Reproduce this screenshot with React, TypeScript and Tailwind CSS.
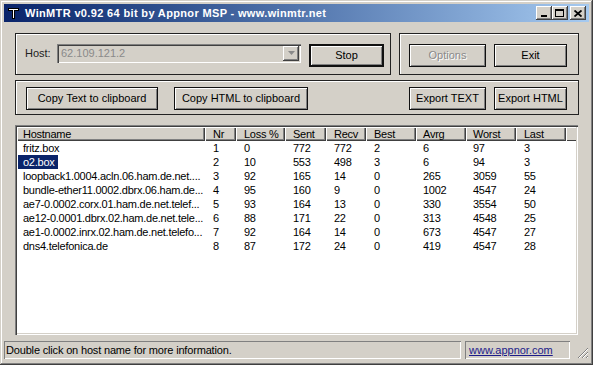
import React from "react";

type Hop = {
  host: string;
  nr: number;
  loss: number;
  sent: number;
  recv: number;
  best: number;
  avrg: number;
  worst: number;
  last: number;
};

const hops: Hop[] = [
  { host: "fritz.box", nr: 1, loss: 0, sent: 772, recv: 772, best: 2, avrg: 6, worst: 97, last: 3 },
  { host: "o2.box", nr: 2, loss: 10, sent: 553, recv: 498, best: 3, avrg: 6, worst: 94, last: 3 },
  { host: "loopback1.0004.acln.06.ham.de.net....", nr: 3, loss: 92, sent: 165, recv: 14, best: 0, avrg: 265, worst: 3059, last: 55 },
  { host: "bundle-ether11.0002.dbrx.06.ham.de...", nr: 4, loss: 95, sent: 160, recv: 9, best: 0, avrg: 1002, worst: 4547, last: 24 },
  { host: "ae7-0.0002.corx.01.ham.de.net.telef...", nr: 5, loss: 93, sent: 164, recv: 13, best: 0, avrg: 330, worst: 3554, last: 50 },
  { host: "ae12-0.0001.dbrx.02.ham.de.net.tele...", nr: 6, loss: 88, sent: 171, recv: 22, best: 0, avrg: 313, worst: 4548, last: 25 },
  { host: "ae1-0.0002.inrx.02.ham.de.net.telefo...", nr: 7, loss: 92, sent: 164, recv: 14, best: 0, avrg: 673, worst: 4547, last: 27 },
  { host: "dns4.telefonica.de", nr: 8, loss: 87, sent: 172, recv: 24, best: 0, avrg: 419, worst: 4547, last: 28 },
];

// column widths, written out so tailwind picks them up
const cols = [
  { label: "Hostname", w: "w-[188px]", pad: "pl-[6px]" },
  { label: "Nr", w: "w-[31px]", pad: "pl-[8px]" },
  { label: "Loss %", w: "w-[49px]", pad: "pl-[8px]" },
  { label: "Sent", w: "w-[41px]", pad: "pl-[8px]" },
  { label: "Recv", w: "w-[40px]", pad: "pl-[8px]" },
  { label: "Best", w: "w-[50px]", pad: "pl-[8px]" },
  { label: "Avrg", w: "w-[50px]", pad: "pl-[7px]" },
  { label: "Worst", w: "w-[50px]", pad: "pl-[7px]" },
  { label: "Last", w: "w-[50px]", pad: "pl-[8px]" },
];

const Btn: React.FC<{
  className: string;
  disabled?: boolean;
  isDefault?: boolean;
  children: React.ReactNode;
}> = ({ className, disabled, isDefault, children }) => (
  <div
    className={`${className} h-[23px] shrink-0 bg-[#d4d0c8] ${
      isDefault ? "border-2" : "border"
    } border-[#111] shadow-[inset_1px_1px_0_#ffffff,inset_-1px_-1px_0_#808080] flex items-center justify-center ${
      disabled ? "text-[#8a8a8a] [text-shadow:1px_1px_0_#ffffff]" : "text-black"
    }`}
  >
    {children}
  </div>
);

const CaptionBtn: React.FC<{ children: React.ReactNode }> = ({ children }) => (
  <div className="w-[16px] h-[14px] bg-[#d4d0c8] shadow-[inset_-1px_-1px_0_#404040,inset_1px_1px_0_#ffffff,inset_-2px_-2px_0_#808080] flex items-center justify-center">
    {children}
  </div>
);

const App: React.FC = () => {
  return (
    <div className="w-[593px] h-[365px] bg-[#d4d0c8] p-[4px] flex flex-col overflow-hidden font-['Liberation_Sans',Arial,sans-serif] text-[11px] text-black shadow-[inset_-1px_-1px_0_#404040,inset_1px_1px_0_#d4d0c8,inset_-2px_-2px_0_#808080,inset_2px_2px_0_#ffffff]">
      {/* Title bar */}
      <div className="h-[18px] shrink-0 flex items-center bg-linear-to-r from-[#0a246a] to-[#a6caf0] pl-[2px] pr-[3px]">
        <svg width="16" height="16" viewBox="0 0 16 16" className="shrink-0">
          <path d="M2 3h11v3H9v8H6V6H2z" fill="#000" />
          <path d="M3 4h9v1H8v8H7V5H3z" fill="#fff" />
        </svg>
        <span className="ml-[3px] font-bold text-white text-[11px] tracking-[0.35px] whitespace-nowrap">
          WinMTR v0.92 64 bit by Appnor MSP - www.winmtr.net
        </span>
        <div className="ml-auto flex items-center">
          <CaptionBtn>
            <div className="w-[6px] h-[2px] bg-black mt-[6px] mr-[1px]" />
          </CaptionBtn>
          <CaptionBtn>
            <div className="w-[9px] h-[8px] border border-black border-t-2 mr-[1px]" />
          </CaptionBtn>
          <div className="w-[2px]" />
          <CaptionBtn>
            <svg width="8" height="7" viewBox="0 0 8 7" className="mr-[1px]">
              <path d="M0.5 0.5L7.5 6.5M7.5 0.5L0.5 6.5" stroke="#000" strokeWidth="1.8" />
            </svg>
          </CaptionBtn>
        </div>
      </div>

      <div className="pl-[11px] flex flex-col">
        {/* Host / Stop, Options / Exit */}
        <div className="mt-[11px] flex gap-[8px]">
          <div className="w-[376px] h-[42px] border border-[#222] shadow-[inset_1px_1px_0_#ffffff] flex items-start pt-[10px] pl-[9px]">
            <div className="w-[32px] h-[19px] flex items-center text-[#222]">Host:</div>
            <div className="w-[244px] h-[19px] bg-[#d4d0c8] shadow-[inset_1px_1px_0_#808080,inset_2px_2px_0_#404040,inset_-1px_-1px_0_#ffffff] flex items-center pl-[4px] pr-[2px]">
              <span className="text-[#8a8a8a]">62.109.121.2</span>
              <div className="ml-auto w-[16px] h-[15px] bg-[#d4d0c8] shadow-[inset_-1px_-1px_0_#404040,inset_1px_1px_0_#ffffff,inset_-2px_-2px_0_#808080] flex items-center justify-center">
                <svg width="7" height="5" viewBox="0 0 7 5">
                  <path d="M0 0h7L3.5 4z" fill="#8a8a8a" />
                </svg>
              </div>
            </div>
            <Btn className="w-[75px] ml-[8px]" isDefault>
              Stop
            </Btn>
          </div>
          <div className="w-[180px] h-[42px] border border-[#222] shadow-[inset_1px_1px_0_#ffffff] flex items-start gap-[8px] pt-[10px] pl-[9px]">
            <Btn className="w-[77px]" disabled>
              Options
            </Btn>
            <Btn className="w-[73px]">Exit</Btn>
          </div>
        </div>

        {/* Export buttons */}
        <div className="mt-[5px] w-[564px] h-[35px] border border-[#222] shadow-[inset_1px_1px_0_#ffffff] flex items-start pt-[6px] pl-[10px] pr-[11px]">
          <Btn className="w-[132px]">Copy Text to clipboard</Btn>
          <Btn className="w-[134px] ml-[16px]">Copy HTML to clipboard</Btn>
          <div className="ml-auto flex gap-[8px]">
            <Btn className="w-[77px]">Export TEXT</Btn>
            <Btn className="w-[73px]">Export HTML</Btn>
          </div>
        </div>

        {/* List view */}
        <div className="mt-[10px] w-[563px] h-[210px] bg-white p-[2px] tracking-[-0.25px] shadow-[inset_1px_1px_0_#808080,inset_2px_2px_0_#404040,inset_-1px_-1px_0_#ffffff,inset_-2px_-2px_0_#d4d0c8] flex flex-col">
          <div className="h-[14px] flex shrink-0">
            {cols.map((c) => (
              <div
                key={c.label}
                className={`${c.w} ${c.pad} h-full bg-[#d4d0c8] shadow-[inset_1px_1px_0_#ffffff,inset_-1px_-1px_0_#404040,inset_-2px_-2px_0_#808080] flex items-center leading-none whitespace-nowrap`}
              >
                {c.label}
              </div>
            ))}
            <div className="flex-1 h-full bg-[#d4d0c8] shadow-[inset_1px_1px_0_#ffffff,inset_0_-1px_0_#404040]" />
          </div>
          {hops.map((h, i) => {
            const vals = [h.nr, h.loss, h.sent, h.recv, h.best, h.avrg, h.worst, h.last];
            return (
              <div key={h.nr} className="h-[14px] flex items-center leading-none whitespace-nowrap">
                {i === 1 ? (
                  <div className="w-[188px] pl-[1px]">
                    <span className="bg-[#0a246a] text-white pl-[5px] pr-[3px] py-[1px]">{h.host}</span>
                  </div>
                ) : (
                  <div className="w-[188px] pl-[6px] overflow-hidden">{h.host}</div>
                )}
                {vals.map((v, j) => (
                  <div key={j} className={`${cols[j + 1].w} ${cols[j + 1].pad}`}>
                    {v}
                  </div>
                ))}
              </div>
            );
          })}
        </div>
      </div>

      {/* Status bar */}
      <div className="mt-[6px] h-[18px] flex shrink-0">
        <div className="w-[457px] h-full tracking-[-0.17px] shadow-[inset_1px_1px_0_#808080,inset_-1px_-1px_0_#ffffff] flex items-center pl-[2px]">
          Double click on host name for more information.
        </div>
        <div className="ml-[4px] w-[105px] h-full shadow-[inset_1px_1px_0_#808080,inset_-1px_-1px_0_#ffffff] flex items-center pl-[4px]">
          <span className="text-[#1c1c8a] underline">www.appnor.com</span>
        </div>
        <div className="flex-1 flex items-end justify-end">
          <svg width="12" height="12" viewBox="0 0 12 12">
            <path d="M11 1L1 11M11 5L5 11M11 9L9 11" stroke="#808080" strokeWidth="1" />
            <path d="M11 2L2 11M11 6L6 11M11 10L10 11" stroke="#ffffff" strokeWidth="1" />
          </svg>
        </div>
      </div>
    </div>
  );
};

export default App;
